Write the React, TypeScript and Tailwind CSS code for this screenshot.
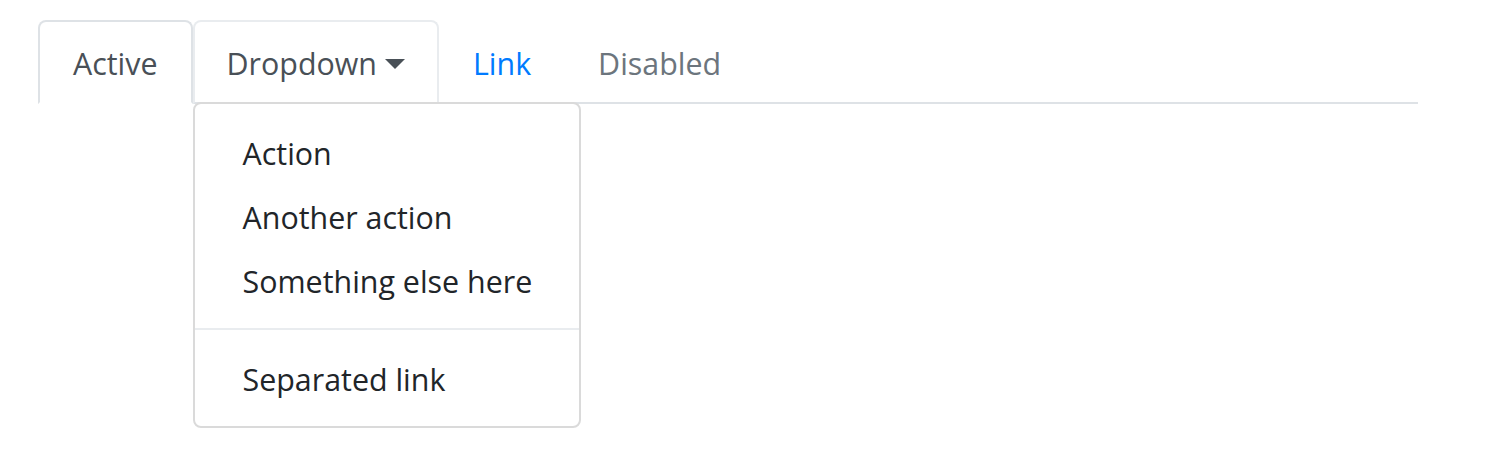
import React from "react";

export default function App() {
  const font = { fontFamily: '"Open Sans", "Noto Sans", sans-serif' };
  return (
    <div className="min-h-[449px] w-[1501px] bg-white pt-[20px] pl-[38px]" style={font}>
      <ul className="flex w-[1380px] border-b-2 border-[#dee2e6] text-[30.4px] leading-[48px]">
        <li className="-mb-[2px]">
          <a className="block rounded-t-[8px] border-2 border-[#dee2e6] border-b-white bg-white px-[33px] pt-[18px] pb-[14px] text-[#495057]">
            Active
          </a>
        </li>
        <li className="relative -mb-[2px]">
          <a className="flex items-center rounded-t-[8px] border-2 border-[#e9ecef] border-b-[#dee2e6] px-[32px] pt-[18px] pb-[14px] text-[#495057]">
            Dropdown
            <span className="ml-[8px] h-0 w-0 border-x-[10px] border-t-[10px] border-x-transparent border-t-[#495057]" />
          </a>
          <div className="absolute left-0 top-[calc(100%-2px)] z-10 w-[388px] rounded-[8px] border-2 border-[#dadada] bg-white py-[16px] text-[#212529]">
            <a className="block whitespace-nowrap px-[48px] pt-[10px] pb-[6px]">Action</a>
            <a className="block whitespace-nowrap px-[48px] pt-[10px] pb-[6px]">Another action</a>
            <a className="block whitespace-nowrap px-[48px] pt-[10px] pb-[6px]">Something else here</a>
            <div className="my-[16px] border-t-2 border-[#e9ecef]" />
            <a className="block whitespace-nowrap px-[48px] pt-[10px] pb-[6px]">Separated link</a>
          </div>
        </li>
        <li className="-mb-[2px]">
          <a className="block border-2 border-transparent px-[32px] pt-[18px] pb-[14px] text-[#007bff]">Link</a>
        </li>
        <li className="-mb-[2px]">
          <a className="block border-2 border-transparent pl-[31px] pr-[32px] pt-[18px] pb-[14px] text-[#6c757d]">Disabled</a>
        </li>
      </ul>
    </div>
  );
}
